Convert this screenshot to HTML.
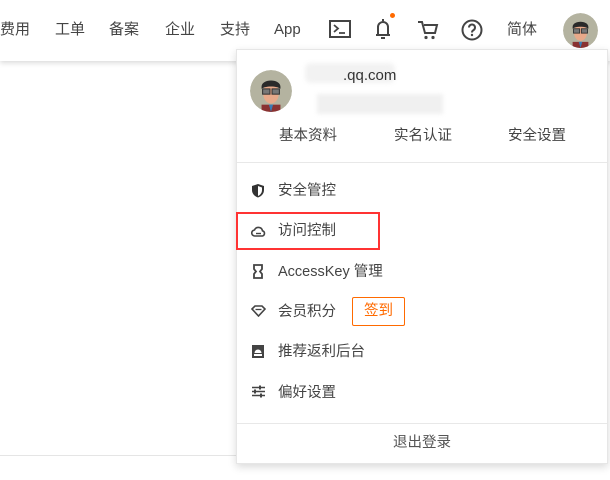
<!DOCTYPE html>
<html><head><meta charset="utf-8"><style>
*{margin:0;padding:0;box-sizing:border-box}
body{width:610px;height:480px;overflow:hidden;background:#fff;font-family:"Liberation Sans","Noto Sans CJK SC",sans-serif;color:#444;position:relative}
.hdr{position:absolute;left:0;top:0;width:610px;height:61px;background:#fff;box-shadow:0 2px 5px rgba(0,0,0,.15)}
.t{position:absolute;font-size:15px;line-height:20px;white-space:nowrap}
.ic{position:absolute}
.dd{position:absolute;left:236px;top:49px;width:372px;height:415px;background:#fff;border:1px solid #e6e6e6;box-shadow:0 3px 8px rgba(0,0,0,.15)}
.m{position:absolute;left:41px;font-size:14.5px;color:#444;line-height:20px;white-space:nowrap}
.mi{position:absolute;left:14px}
</style></head><body>
<div style="position:absolute;left:0;top:455px;width:236px;height:1px;background:#e5e5e5"></div>
<div class="hdr"></div>
<div class="t" style="left:0;top:20px">费用</div>
<div class="t" style="left:55px;top:20px">工单</div>
<div class="t" style="left:109px;top:20px">备案</div>
<div class="t" style="left:165px;top:20px">企业</div>
<div class="t" style="left:220px;top:20px">支持</div>
<div class="t" style="left:274px;top:20px">App</div>
<svg class="ic" style="left:329px;top:20px" width="22" height="18" viewBox="0 0 22 18"><rect x="1" y="1" width="20" height="16" fill="none" stroke="#444" stroke-width="2"/><path d="M5 5l4 3.5-4 3.5M10 13h6" fill="none" stroke="#444" stroke-width="1.8"/></svg>
<svg class="ic" style="left:373px;top:17px" width="20" height="24" viewBox="0 0 20 24"><path d="M10 2v2M5 17V10a5 5 0 0 1 10 0v7M3 18h14M8 21h4" fill="none" stroke="#444" stroke-width="2"/></svg>
<div style="position:absolute;left:390px;top:13px;width:5px;height:5px;border-radius:50%;background:#ff6a00"></div>
<svg class="ic" style="left:417px;top:20px" width="22" height="20" viewBox="0 0 22 20"><path d="M1 2h4l3 11h10l2-8H7" fill="none" stroke="#444" stroke-width="2"/><circle cx="9" cy="17.5" r="1.6" fill="#444"/><circle cx="16" cy="17.5" r="1.6" fill="#444"/></svg>
<svg class="ic" style="left:461px;top:19px" width="22" height="22" viewBox="0 0 22 22"><circle cx="11" cy="11" r="9.5" fill="none" stroke="#444" stroke-width="2"/><path d="M8 8.5a3 3 0 1 1 4.5 2.6c-1 .6-1.5 1.2-1.5 2.4" fill="none" stroke="#444" stroke-width="2"/><circle cx="11" cy="16" r="1.2" fill="#444"/></svg>
<div class="t" style="left:507px;top:20px">简体</div>
<svg class="ic" style="left:563px;top:13px" width="35" height="35" viewBox="0 0 40 40"><defs><clipPath id="c1"><circle cx="20" cy="20" r="20"/></clipPath></defs><g clip-path="url(#c1)"><circle cx="20" cy="20" r="20" fill="#b4b3a0"/><rect x="11" y="33" width="18" height="10" fill="#8a3232"/><path d="M18 33h4l-2 7z" fill="#3a7bb5"/><ellipse cx="20" cy="22" rx="7.5" ry="10" fill="#e8a98a"/><path d="M11 16c0-8 18-8 18 0v2c-3-3-15-3-18 0z" fill="#2a2a2a"/><rect x="12" y="18" width="7" height="5" fill="#777" stroke="#333" stroke-width="1"/><rect x="21" y="18" width="7" height="5" fill="#777" stroke="#333" stroke-width="1"/></g></svg>
<div class="dd">
<svg style="position:absolute;left:13px;top:20px" width="42" height="42" viewBox="0 0 40 40"><defs><clipPath id="c2"><circle cx="20" cy="20" r="20"/></clipPath></defs><g clip-path="url(#c2)"><circle cx="20" cy="20" r="20" fill="#b4b3a0"/><rect x="11" y="33" width="18" height="10" fill="#8a3232"/><path d="M18 33h4l-2 7z" fill="#3a7bb5"/><ellipse cx="20" cy="22" rx="7.5" ry="10" fill="#e8a98a"/><path d="M11 16c0-8 18-8 18 0v2c-3-3-15-3-18 0z" fill="#2a2a2a"/><rect x="12" y="18" width="7" height="5" fill="#777" stroke="#333" stroke-width="1"/><rect x="21" y="18" width="7" height="5" fill="#777" stroke="#333" stroke-width="1"/></g></svg>
<div style="position:absolute;left:68px;top:13px;width:90px;height:20px;background:#f2f2f2;border-radius:6px;filter:blur(2px)"></div>
<div class="t" style="left:106px;top:16px;font-size:15px;color:#333">.qq.com</div>
<div style="position:absolute;left:80px;top:44px;width:126px;height:20px;background:#f0f0f0;filter:blur(2px)"></div>
<div class="t" style="left:42px;top:76px;font-size:14.5px">基本资料</div>
<div class="t" style="left:157px;top:76px;font-size:14.5px">实名认证</div>
<div class="t" style="left:271px;top:76px;font-size:14.5px">安全设置</div>
<div style="position:absolute;left:0;top:112px;width:100%;height:1px;background:#e8e8e8"></div>
<svg class="mi" style="top:133px" width="14" height="15" viewBox="0 0 14 15"><path d="M7 1l6 2v4c0 4-3 6.5-6 7.5C4 13.5 1 11 1 7V3z" fill="#333"/><path d="M7 3v10c2-1 4-3 4-6V4.5z" fill="#fff"/></svg>
<div class="m" style="top:131px">安全管控</div>
<svg class="mi" style="top:175px" width="15" height="12" viewBox="0 0 15 12"><path d="M4 11a3 3 0 0 1-.5-6 4.2 4.2 0 0 1 8 .8A2.7 2.7 0 0 1 11.5 11z" fill="none" stroke="#444" stroke-width="1.6"/><path d="M5 8.5h5" stroke="#444" stroke-width="1.4"/></svg>
<div class="m" style="top:171px">访问控制</div>
<div style="position:absolute;left:-1px;top:162px;width:144px;height:38px;border:2px solid #f33"></div>
<svg class="mi" style="top:214px" width="14" height="15" viewBox="0 0 14 15"><path d="M3 1h8v4l-2 2.5 2 2.5v4H3v-4l2-2.5L3 5z" fill="none" stroke="#444" stroke-width="1.8"/></svg>
<div class="m" style="top:212px">AccessKey 管理</div>
<svg class="mi" style="top:255px" width="15" height="12" viewBox="0 0 15 12"><path d="M1 4l3-3h7l3 3-6.5 7z" fill="none" stroke="#444" stroke-width="1.6"/><path d="M4.5 4.5h6" stroke="#444" stroke-width="1.3"/></svg>
<div class="m" style="top:252px">会员积分</div>
<div style="position:absolute;left:115px;top:247px;width:53px;height:29px;border:1px solid #ff6a00;border-radius:2px;color:#ff6a00;font-size:14.5px;text-align:center;line-height:27px">签到</div>
<svg class="mi" style="top:294px" width="14" height="15" viewBox="0 0 14 15"><rect x="1" y="1" width="12" height="13" fill="#444"/><path d="M3.5 9a3.5 3.5 0 0 1 7 0z M3 10h8v2H3z" fill="#fff"/></svg>
<div class="m" style="top:292px">推荐返利后台</div>
<svg class="mi" style="top:335px" width="15" height="13" viewBox="0 0 15 13"><path d="M1 2.5h13M1 6.5h13M1 10.5h13" stroke="#444" stroke-width="1.5"/><rect x="8" y="0.5" width="2" height="4" fill="#444"/><rect x="3" y="4.5" width="2" height="4" fill="#444"/><rect x="9" y="8.5" width="2" height="4" fill="#444"/></svg>
<div class="m" style="top:333px">偏好设置</div>
<div style="position:absolute;left:0;top:373px;width:100%;height:1px;background:#e8e8e8"></div>
<div class="t" style="left:0;width:100%;text-align:center;top:383px;font-size:14.5px;color:#555">退出登录</div>
</div>
</body></html>
